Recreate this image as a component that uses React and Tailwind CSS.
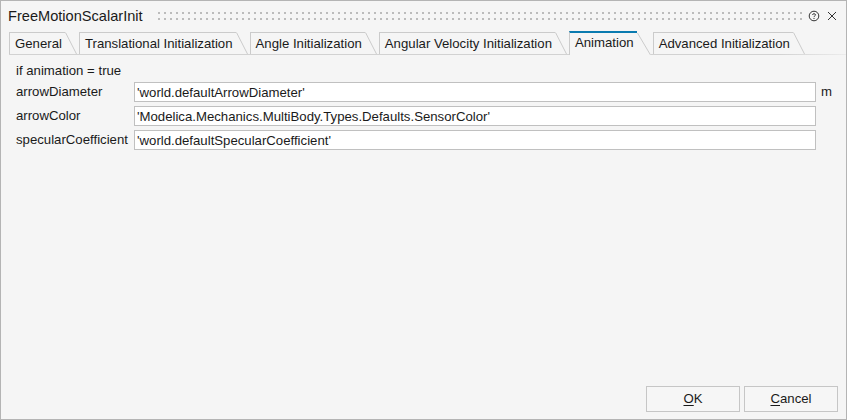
import React from "react";

const tabs = [
  "General",
  "Translational Initialization",
  "Angle Initialization",
  "Angular Velocity Initialization",
  "Animation",
  "Advanced Initialization",
];

function Tab({ label, active }) {
  if (active) {
    return (
      <div className="relative z-10 -mb-px flex h-[24px] bg-[#f5f5f5]">
        <div className="flex items-center border-l border-t-2 border-l-[#cbcbcb] border-t-[#0a7bb0] pl-[5px] pr-[3px] pb-[2px] text-[13.2px] leading-none text-[#1a1a1a]">
          {label}
        </div>
        <svg width="14" height="24" className="block">
          <line x1="0.5" y1="2" x2="13.5" y2="24" stroke="#cbcbcb" />
        </svg>
      </div>
    );
  }
  return (
    <div className="flex h-[22px]">
      <div className="flex items-center border-l border-t border-[#cbcbcb] pl-[5px] pr-[3px] text-[13.2px] leading-none text-[#1a1a1a]">
        {label}
      </div>
      <svg width="12" height="22" className="block">
        <line x1="0.5" y1="0.5" x2="11.5" y2="22" stroke="#cbcbcb" />
      </svg>
    </div>
  );
}

function Grip() {
  return (
    <svg className="block h-[10px] flex-1" height="10">
      <defs>
        <pattern id="grip" width="6" height="6" patternUnits="userSpaceOnUse">
          <rect x="0" y="0" width="2" height="2" fill="#bcbcbc" />
        </pattern>
      </defs>
      <rect x="0" y="0" width="100%" height="2" fill="url(#grip)" />
      <rect x="0" y="6" width="100%" height="2" fill="url(#grip)" />
    </svg>
  );
}

const rows = [
  ["arrowDiameter", "'world.defaultArrowDiameter'", "m"],
  ["arrowColor", "'Modelica.Mechanics.MultiBody.Types.Defaults.SensorColor'", ""],
  ["specularCoefficient", "'world.defaultSpecularCoefficient'", ""],
];

export default function App() {
  return (
    <div
      className="flex h-[420px] w-[847px] flex-col border border-[#b4b4b4] bg-[#f5f5f5] text-[#1a1a1a]"
      style={{ fontFamily: '"Liberation Sans", Arial, sans-serif' }}
    >
      {/* Title bar */}
      <div className="flex h-[30px] items-center pl-[7px] pr-[9px]">
        <span className="text-[14.6px] leading-none text-[#1a1a1a]">FreeMotionScalarInit</span>
        <div className="ml-[15px] mr-[5px] flex flex-1 items-center pt-[1px]">
          <Grip />
        </div>
        <svg width="12" height="12" viewBox="0 0 12 12" className="block">
          <circle cx="6" cy="6" r="4.8" fill="none" stroke="#333" strokeWidth="1" />
          <path d="M4.5 4.8 C4.5 3.4 7.5 3.4 7.5 4.8 C7.5 5.9 6 5.9 6 7.1" fill="none" stroke="#333" strokeWidth="1" />
          <rect x="5.5" y="8" width="1" height="1" fill="#333" />
        </svg>
        <svg width="10" height="10" viewBox="0 0 10 10" className="ml-[7px] block">
          <path d="M1 1 L9 9 M9 1 L1 9" stroke="#333" strokeWidth="1" />
        </svg>
      </div>

      {/* Tabs */}
      <div className="ml-[8px]">
        <div className="flex h-[23px] items-end gap-[2px]">
          {tabs.map((t) => (
            <Tab key={t} label={t} active={t === "Animation"} />
          ))}
        </div>
        <div className="h-px bg-[linear-gradient(to_right,#d2d2d2_92%,#ececec)]" />
      </div>

      {/* Content */}
      <div className="flex-1 pl-[15px] text-[13.2px]">
        <div className="mt-[8px] h-[16px] leading-[16px]">if animation = true</div>
        <div className="mt-[3px] grid grid-cols-[118px_682px_auto] gap-y-[4px]">
          {rows.map(([label, value, unit]) => (
            <React.Fragment key={label}>
              <div className="flex h-[20px] items-center">{label}</div>
              <input
                readOnly
                value={value}
                className="h-[20px] w-[682px] border border-[#c0c0c0] bg-white pl-[2px] text-[13.2px] text-[#1a1a1a] outline-none"
              />
              <div className="flex h-[20px] items-center pl-[5px]">{unit}</div>
            </React.Fragment>
          ))}
        </div>
      </div>

      {/* Buttons */}
      <div className="flex justify-end gap-[4px] pb-[7px] pr-[8px]">
        <button className="h-[26px] w-[94px] border border-[#c6c6c6] bg-[#f6f6f6] text-[13.2px] text-[#1a1a1a]">
          <span className="underline underline-offset-2">O</span>K
        </button>
        <button className="h-[26px] w-[94px] border border-[#c6c6c6] bg-[#f6f6f6] text-[13.2px] text-[#1a1a1a]">
          <span className="underline underline-offset-2">C</span>ancel
        </button>
      </div>
    </div>
  );
}
